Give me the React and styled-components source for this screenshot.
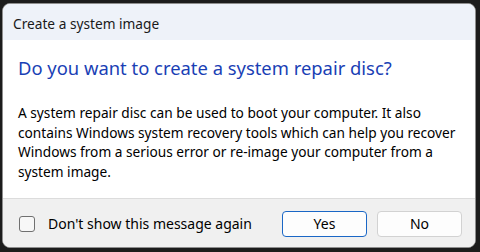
import React from "react";
import styled, { createGlobalStyle } from "styled-components";

const GlobalStyle = createGlobalStyle`
  html, body { margin: 0; padding: 0; background: #1c1c1c; }
  * { box-sizing: border-box; }
`;

const Desktop = styled.div`
  width: 480px;
  height: 252px;
  padding: 3px 4px 4px 2px;
  background: #1c1c1c;
  font-family: "Segoe UI", "Noto Sans", sans-serif;
  display: flex;
`;

const Dialog = styled.div`
  flex: 1;
  display: flex;
  flex-direction: column;
  border-radius: 8px;
  overflow: hidden;
  border: 1px solid #8e8e8e;
  background: #ffffff;
`;

const TitleBar = styled.div`
  height: 36px;
  flex: none;
  display: flex;
  align-items: center;
  padding: 2px 0 0 10px;
  background: #eef2f9;
  color: #1a1a1a;
  font-size: 13.7px;
`;

const Content = styled.div`
  flex: 1;
  padding: 15px 15px 0 15px;
  background: #ffffff;
`;

const Heading = styled.h1`
  margin: 0;
  font-weight: 400;
  font-size: 18.4px;
  line-height: 26px;
  color: #1a3fb5;
  white-space: nowrap;
`;

const Body = styled.p`
  margin: 22px 0 0 0;
  font-size: 13.7px;
  line-height: 19.7px;
  color: #000000;
  white-space: nowrap;
`;

const Footer = styled.div`
  height: 49px;
  flex: none;
  display: flex;
  align-items: center;
  padding: 1px 13px 0 16px;
  background: #f0f0f0;
  border-top: 1px solid #dcdcdc;
`;

const CheckLabel = styled.label`
  display: flex;
  align-items: center;
  gap: 13px;
  font-size: 14px;
  color: #000000;
  flex: 1;
`;

const CheckBox = styled.span`
  width: 16px;
  height: 16px;
  border: 1px solid #707070;
  border-radius: 3px;
  background: #f7f7f7;
`;

const ButtonRow = styled.div`
  display: flex;
  gap: 10px;
`;

const Button = styled.button`
  width: 85px;
  height: 26px;
  border-radius: 4px;
  border: 1px solid ${(p) => (p.$primary ? "#1a67c6" : "#d2d2d2")};
  background: #fdfdfd;
  font-family: inherit;
  font-size: 14px;
  color: #000000;
  padding: 0;
`;

export default function App() {
  return (
    <>
      <GlobalStyle />
      <Desktop>
        <Dialog>
          <TitleBar>Create a system image</TitleBar>
          <Content>
            <Heading>Do you want to create a system repair disc?</Heading>
            <Body>
              A system repair disc can be used to boot your computer. It also
              <br />
              contains Windows system recovery tools which can help you recover
              <br />
              Windows from a serious error or re-image your computer from a
              <br />
              system image.
            </Body>
          </Content>
          <Footer>
            <CheckLabel>
              <CheckBox />
              Don't show this message again
            </CheckLabel>
            <ButtonRow>
              <Button $primary>Yes</Button>
              <Button>No</Button>
            </ButtonRow>
          </Footer>
        </Dialog>
      </Desktop>
    </>
  );
}
